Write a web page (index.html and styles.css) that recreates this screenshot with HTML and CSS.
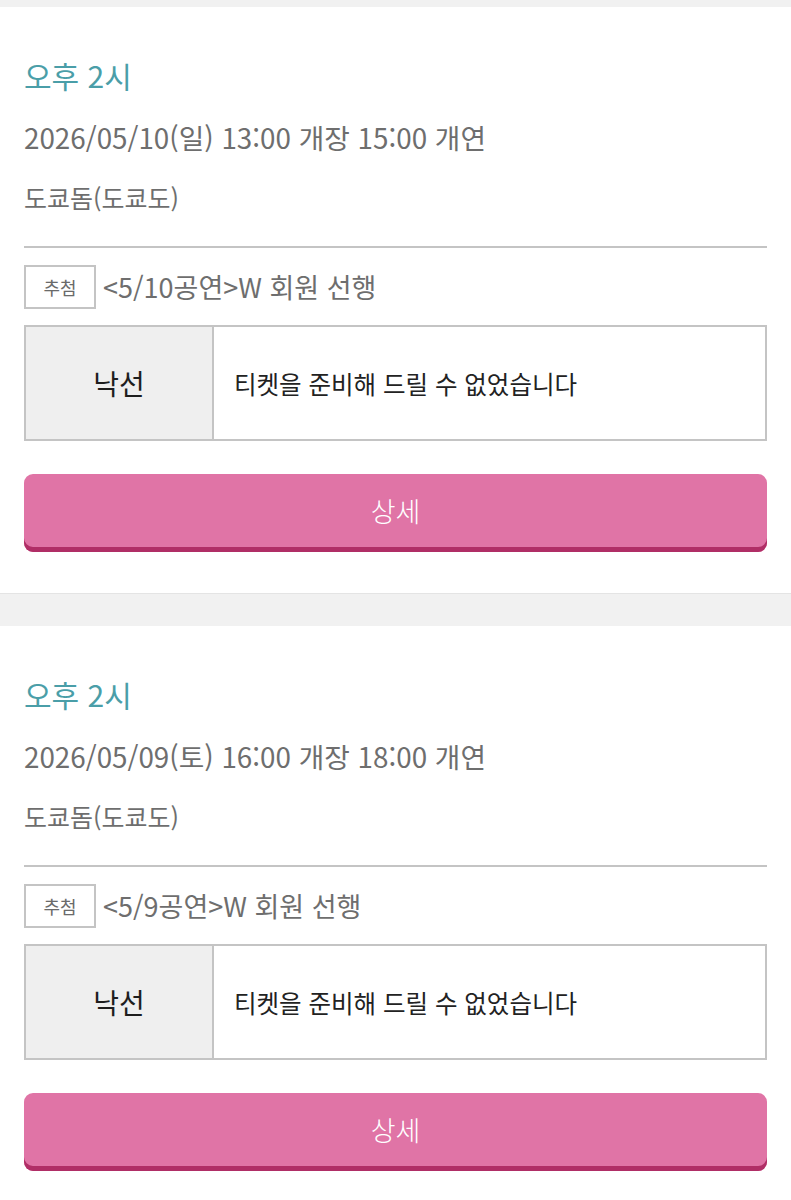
FILE: index.html
```html
<!DOCTYPE html>
<html lang="ko">
<head>
<meta charset="utf-8">
<link rel="stylesheet" href="styles.css">
</head>
<body>
<div class="list">
  <section class="card">
    <h2 class="time">오후 2시</h2>
    <p class="date">2026/05/10(일) 13:00 개장 15:00 개연</p>
    <p class="venue">도쿄돔(도쿄도)</p>
    <hr class="divider">
    <div class="lottery">
      <span class="badge">추첨</span>
      <span class="lottery-name">&lt;5/10공연&gt;W 회원 선행</span>
    </div>
    <div class="result">
      <div class="result-label">낙선</div>
      <div class="result-text">티켓을 준비해 드릴 수 없었습니다</div>
    </div>
    <button class="detail-btn">상세</button>
  </section>
  <section class="card">
    <h2 class="time">오후 2시</h2>
    <p class="date">2026/05/09(토) 16:00 개장 18:00 개연</p>
    <p class="venue">도쿄돔(도쿄도)</p>
    <hr class="divider">
    <div class="lottery">
      <span class="badge">추첨</span>
      <span class="lottery-name">&lt;5/9공연&gt;W 회원 선행</span>
    </div>
    <div class="result">
      <div class="result-label">낙선</div>
      <div class="result-text">티켓을 준비해 드릴 수 없었습니다</div>
    </div>
    <button class="detail-btn">상세</button>
  </section>
</div>
</body>
</html>
```
FILE: styles.css
```css
* { box-sizing: border-box; }
html, body { margin: 0; padding: 0; }
body {
  background: #f1f1f1;
  font-family: "Noto Sans CJK KR", "Noto Sans", sans-serif;
}
.list {
  display: flex;
  flex-direction: column;
  gap: 32px;
  padding-top: 7px;
}
.card {
  background: #fff;
  padding: 48px 24px 41px;
  display: flex;
  flex-direction: column;
  border-bottom: 1px solid #e4e4e4;
}
.time {
  margin: 0;
  font-size: 30px;
  line-height: 40px;
  font-weight: 400;
  color: #4a9ea8;
}
.date {
  margin: 22px 0 0;
  font-size: 27.8px;
  line-height: 40px;
  color: #6e6e6e;
}
.venue {
  margin: 20px 0 0;
  font-size: 25px;
  line-height: 40px;
  color: #6e6e6e;
}
.divider {
  margin: 29px 0 0;
  border: 0;
  height: 2px;
  background: #c4c4c4;
}
.lottery {
  margin-top: 17px;
  display: flex;
  align-items: center;
  gap: 7px;
  height: 44px;
}
.badge {
  width: 72px;
  height: 44px;
  border: 2px solid #c4c4c4;
  display: flex;
  align-items: center;
  justify-content: center;
  font-size: 18px;
  color: #6a6a6a;
}
.lottery-name {
  font-size: 27px;
  color: #6e6e6e;
  line-height: 44px;
}
.result {
  margin-top: 16px;
  display: flex;
  height: 116px;
  border: 2px solid #c4c4c4;
}
.result-label {
  width: 188px;
  background: #efefef;
  border-right: 2px solid #c4c4c4;
  display: flex;
  align-items: center;
  justify-content: center;
  font-size: 28px;
  font-weight: 400;
  color: #1e1e1e;
}
.result-text {
  flex: 1;
  display: flex;
  align-items: center;
  padding-left: 20px;
  font-size: 24.5px;
  color: #222;
}
.detail-btn {
  margin-top: 33px;
  height: 78px;
  width: 100%;
  border: 0;
  border-radius: 9px;
  background: #e074a6;
  box-shadow: inset 0 -5px 0 #b02e66;
  padding: 0 0 5px;
  color: #fff;
  font-family: inherit;
  font-size: 27px;
  font-weight: 300;
}
```
